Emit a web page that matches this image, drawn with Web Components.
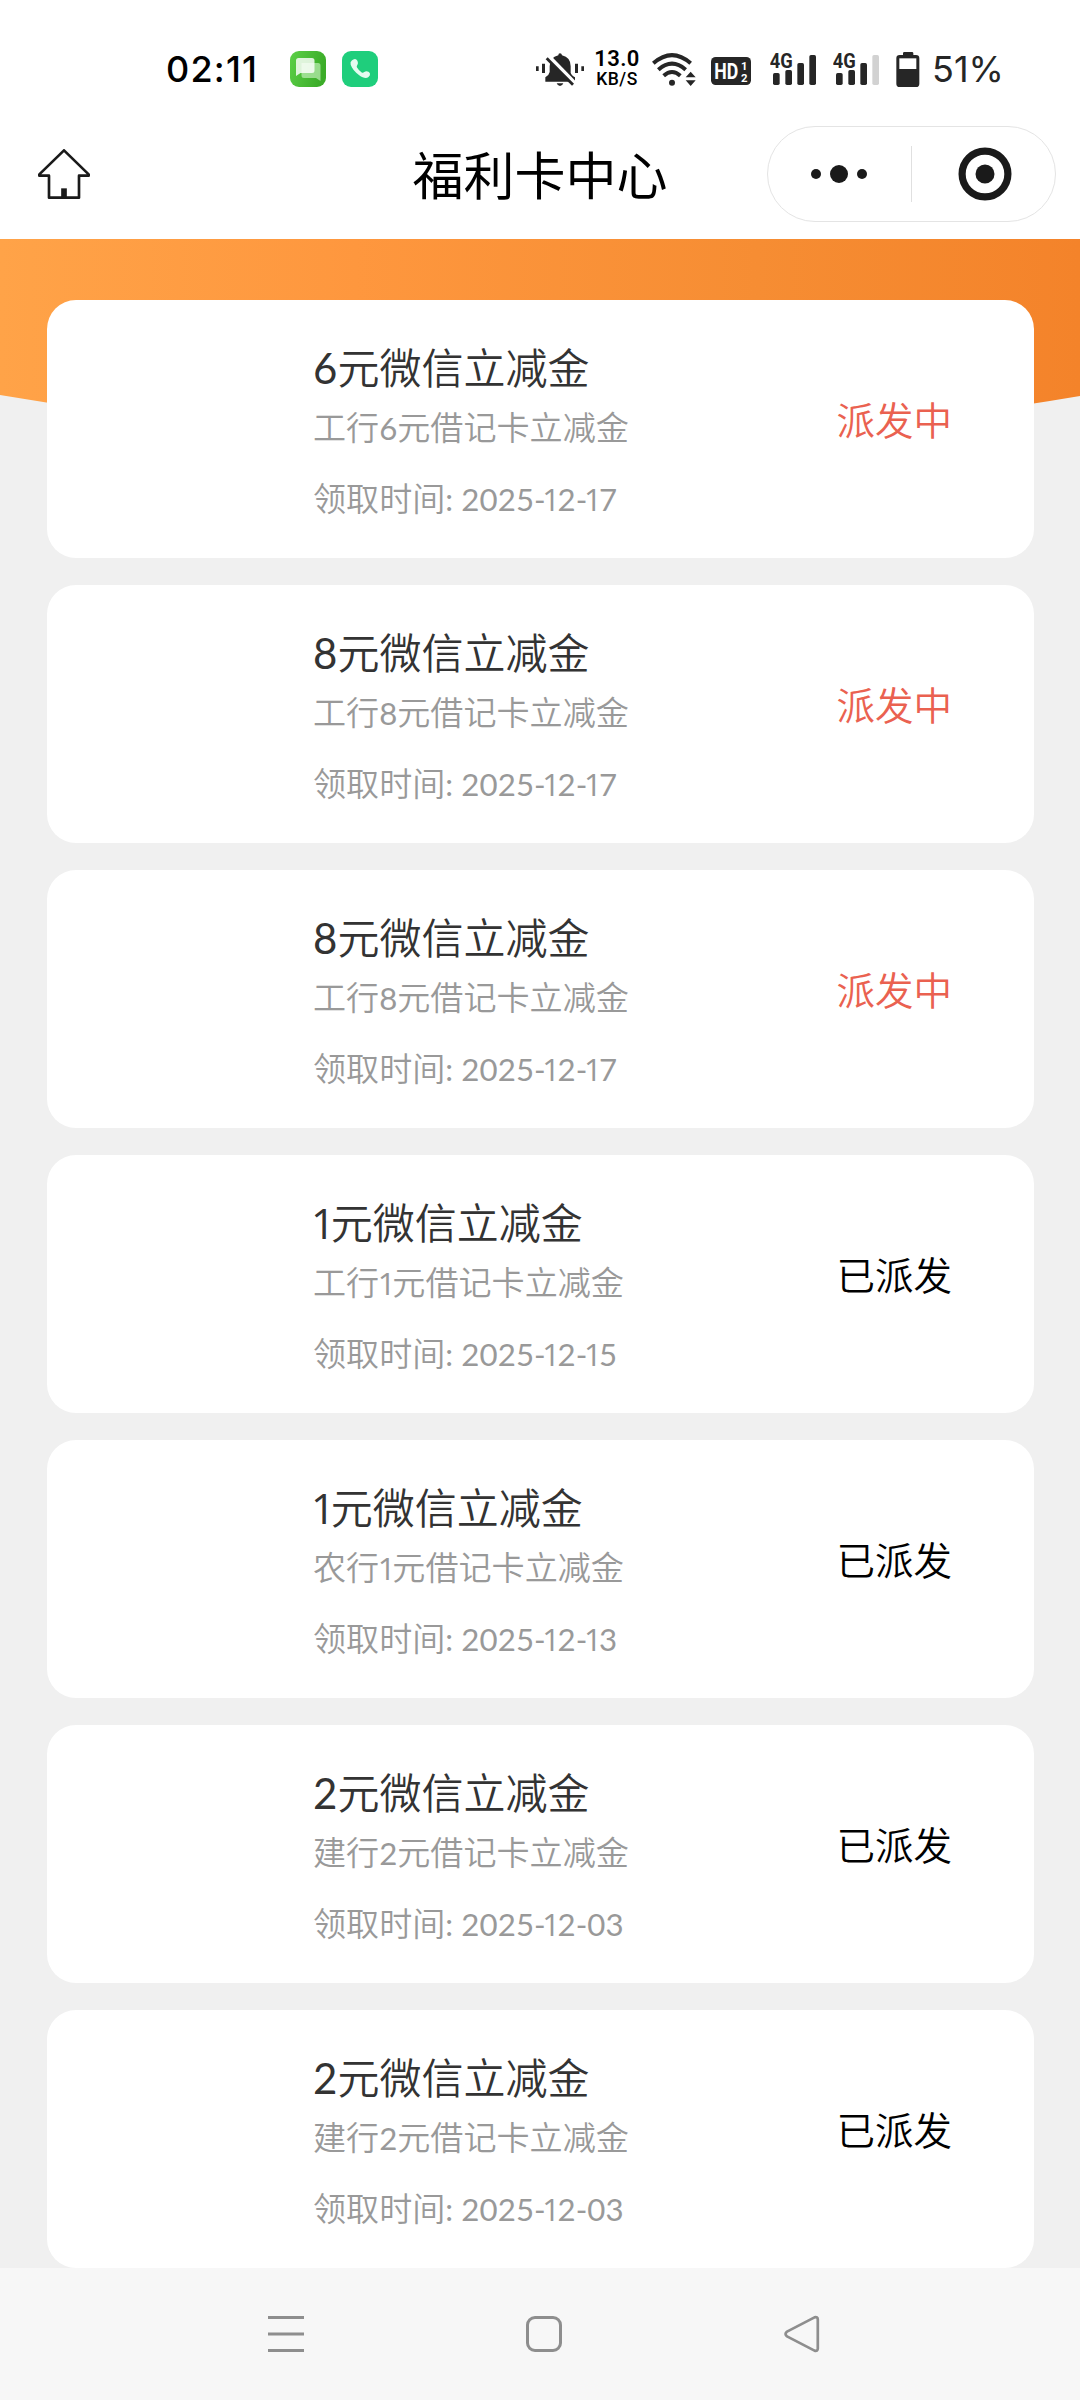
<!DOCTYPE html>
<html lang="zh-CN">
<head>
<meta charset="utf-8">
<title>福利卡中心</title>
<style>
	html, body {
		margin: 0;
		padding: 0;
	}
	body {
		width: 1080px;
		height: 2400px;
		overflow: hidden;
		background: #f0f0f0;
		font-family: Lato, "Noto Sans CJK SC", sans-serif;
	}
</style>
</head>
<body>
<welfare-page></welfare-page>

<script>
const html = String.raw;

function define(name, markup) {
	customElements.define(name, class extends HTMLElement {
		constructor() {
			super();
			this.attachShadow({ mode: 'open' }).innerHTML = markup;
		}
	});
}

const signalIcon = (lastBar) => html`
	<svg width="46" height="36" viewBox="30 60 138 108">
		<text x="29" y="111" font-family="Roboto" font-size="59" font-weight="700" textLength="69" lengthAdjust="spacingAndGlyphs">4G</text>
		<rect x="39" y="126" width="20" height="36" rx="5"/>
		<rect x="76" y="117" width="20" height="45" rx="5"/>
		<rect x="112" y="96" width="20" height="66" rx="5"/>
		<rect x="148" y="72" width="20" height="90" rx="5" fill="${lastBar}"/>
	</svg>
`;

define('status-bar', html`
	<style>
		:host {
			display: flex;
			align-items: center;
			box-sizing: border-box;
			height: 110px;
			padding: 28px 78px 0 166px;
			background: #fff;
			color: #000;
			font-family: Inter, sans-serif;
		}
		svg { display: block; fill: #262626; flex: none; }
		.time { width: 124px; font-size: 36px; font-weight: 500; line-height: 36px; letter-spacing: 1.2px; }
		.apps { display: flex; gap: 16px; }
		.right { display: flex; align-items: center; margin-left: auto; }
		.speed { width: 46px; margin: 0 12px 0 10px; text-align: center; font-family: Roboto, sans-serif; white-space: nowrap; }
		.speed div:first-child { font-size: 22px; font-weight: 600; line-height: 20px; letter-spacing: 0.4px; }
		.speed div:last-child { font-size: 17.500px; font-weight: 500; line-height: 20px; letter-spacing: 0.5px; }
		.hd { margin: 0 19px 0 15px; }
		.second { margin: 0 17px; }
		.percent { width: 70px; margin-left: 12px; color: #262626; font-size: 36px; line-height: 36px; white-space: nowrap; }
	</style>
	<div class="time">02:11</div>
	<div class="apps">
		<svg width="36" height="36" viewBox="0 0 36 36">
			<defs>
				<linearGradient id="g" x1="0" y1="0" x2="1" y2="0.3">
					<stop offset="0" stop-color="#5cd048"/>
					<stop offset="1" stop-color="#3bac28"/>
				</linearGradient>
			</defs>
			<rect width="36" height="36" rx="9" fill="url(#g)"/>
			<path d="M13 12h15q2.500 0 2.500 2.500V30l-4.500-3H14q-2.500 0-2.500-2.500V12z" fill="#c9f2c2" opacity=".65"/>
			<path d="M8.500 7H22q2.500 0 2.500 2.500v10q0 2.500-2.500 2.500H10.500L6 25V9.500Q6 7 8.500 7z" fill="#fff" opacity=".82"/>
		</svg>
		<svg width="36" height="36" viewBox="0 0 36 36">
			<rect width="36" height="36" rx="9" fill="#1fce7c"/>
			<path d="M9.800 9.500Q12 7.300 14 8.200c2 1.200 2.500 4.200 1.300 5.800q-1 1.300-.3 2.500 2 3.300 4.700 5 1.200.8 2.600-.5c1.700-1.500 4.700-.7 5.600 1.300q.7 2-1.400 3.700c-2.200 1.800-5.500 1-9.300-1.800-4.300-3.200-7.600-7.300-8.500-10.500q-.8-2.700 1.100-4.200z" fill="#e4fbf0"/>
		</svg>
	</div>
	<div class="right">
		<svg width="48" height="36" viewBox="48 60 144 108">
			<path d="M120 67q5 0 6 6 26 6 26 33v19q1 6 13 14v13H76v-13q12-8 13-16v-17q0-27 26-33 0-6 5-6z"/>
			<path d="M110 157h20q-3 8-10 8t-10-8z"/>
			<path d="M84 76l80 82" stroke="#fff" stroke-width="15"/>
			<path d="M80 82l79 79" stroke="#262626" stroke-width="8.500"/>
			<path d="M48 106h8v14h-8zM66 98h9v28h-9zM165 98h9v28h-9zM184 106h8v14h-8z"/>
		</svg>
		<div class="speed"><div>13.0</div><div>KB/S</div></div>
		<svg width="44" height="36" viewBox="397 60 132 108">
			<g fill="none" stroke="#262626" stroke-width="12">
				<path d="M401 97q56-49 112 0"/>
				<path d="M416 116q41-36 82 0"/>
				<path d="M432 134q25-22 50 0"/>
			</g>
			<circle cx="457" cy="155" r="9"/>
			<path d="M498 139l15-17 15 17zM498 148h30l-15 17z"/>
		</svg>
		<svg class="hd" width="40" height="36" viewBox="573 60 120 108">
			<rect x="573" y="78" width="120" height="84" rx="14"/>
			<g fill="#fff" font-family="Roboto" font-weight="700">
				<text x="583" y="143" font-size="66" textLength="72" lengthAdjust="spacingAndGlyphs">HD</text>
				<text x="663" y="116" font-size="34">1</text>
				<text x="663" y="152" font-size="34">2</text>
			</g>
		</svg>
		${signalIcon('#262626')}
		<div class="second">${signalIcon('#d2d2d2')}</div>
		<svg width="24" height="36" viewBox="407 60 72 108">
			<path d="M428 72v-5q0-4 4-4h23q4 0 4 4v5h8q10 0 10 10v76q0 10-10 10h-49q-10 0-10-10V82q0-10 10-10z"/>
			<path d="M417 82h51v32h-51z" fill="#fff"/>
		</svg>
		<div class="percent">51%</div>
	</div>
`);

define('app-header', html`
	<style>
		:host {
			display: flex;
			align-items: center;
			justify-content: space-between;
			box-sizing: border-box;
			height: 129px;
			padding: 0 24px 1px 38px;
			background: #fff;
		}
		svg { display: block; }
		.home { width: 275px; }
		h1 { margin: 4px 0 0; font-size: 51px; font-weight: 400; line-height: 60px; color: #000; }
		.capsule {
			display: flex;
			align-items: center;
			box-sizing: border-box;
			width: 289px;
			height: 96px;
			border: 1px solid #e4e4e4;
			border-radius: 48px;
		}
		.more, .close { display: flex; justify-content: center; }
		.more { width: 143px; }
		.close { flex: 1; padding-left: 4px; }
		.line { width: 1px; height: 56px; background: #e0e0e0; }
	</style>
	<div class="home">
		<svg width="52" height="50" viewBox="114 117 156 150" fill="none" stroke="#1a1a1a" stroke-width="8" stroke-linejoin="round">
			<path d="M192 121l74 72v4h-29v66h-90v-66h-29v-4z"/>
			<path d="M192 235v28" stroke-width="17"/>
		</svg>
	</div>
	<h1><slot></slot></h1>
	<div class="capsule">
		<div class="more">
			<svg width="58" height="54" fill="#1a1a1a">
				<circle cx="6" cy="27" r="5"/><circle cx="29" cy="27" r="9"/><circle cx="52" cy="27" r="5"/>
			</svg>
		</div>
		<div class="line"></div>
		<div class="close">
			<svg width="54" height="54" fill="#1a1a1a">
				<circle cx="27" cy="27" r="22.900" fill="none" stroke="#1a1a1a" stroke-width="7.200"/>
				<circle cx="27" cy="27" r="9.500"/>
			</svg>
		</div>
	</div>
`);

define('top-banner', html`
	<style>
		:host { display: block; height: 204px; }
		svg { display: block; }
	</style>
	<svg width="1080" height="204">
		<defs>
			<linearGradient id="b">
				<stop offset="0" stop-color="#ffa348"/>
				<stop offset="0.330" stop-color="#fe973e"/>
				<stop offset="0.700" stop-color="#f68d33"/>
				<stop offset="1" stop-color="#f4832a"/>
			</linearGradient>
		</defs>
		<path d="M0 0H1080V157Q540 249 0 156z" fill="url(#b)"/>
	</svg>
`);

// Digit runs are slightly smaller than the Han text, and "1" has no foot.
function markDigits(text) {
	return text.replace(/[\d:\- ]+/g, (run) => `<span class="num">${run.replace(/1/g, '<span class="one">1</span>')}</span>`);
}

class WelfareCard extends HTMLElement {
	constructor() {
		super();
		this.attachShadow({ mode: 'open' });
	}

	connectedCallback() {
		const { name, desc, date, status } = this.dataset;
		this.shadowRoot.innerHTML = html`
			<style>
				:host {
					display: flex;
					align-items: flex-start;
					justify-content: space-between;
					box-sizing: border-box;
					height: 258px;
					padding: 40px 82px 0 266px;
					border-radius: 29px;
					background: #fff;
					font-weight: 350;
					white-space: nowrap;
				}
				.name { font-size: 42px; line-height: 56px; color: #333; }
				.desc, .date { font-size: 33.1px; line-height: 44px; color: #999; }
				.desc { margin-top: 9px; }
				.date { margin-top: 26px; }
				.num { font-weight: 400; }
				.desc .num, .date .num { font-size: 31.2px; }
				.date .num { letter-spacing: 0.1px; }
				.one { font-family: "Open Sans", sans-serif; margin: 0 -0.100em 0 -0.050em; }
				.date .one { margin: 0 -0.090em 0 -0.110em; }
				.status { margin-top: 58px; font-size: 38.500px; line-height: 44px; color: #000; }
				.status.pending { color: #ea6150; }
			</style>
			<div>
				<div class="name">${markDigits(name)}</div>
				<div class="desc">${markDigits(desc)}</div>
				<div class="date">${markDigits(`领取时间: ${date}`)}</div>
			</div>
			<div class="status ${status === '派发中' ? 'pending' : ''}">${status}</div>
		`;
	}
}
customElements.define('welfare-card', WelfareCard);

define('system-nav', html`
	<style>
		:host {
			display: flex;
			align-items: center;
			justify-content: center;
			gap: 220px;
			box-sizing: border-box;
			height: 132px;
			padding-left: 7px;
			background: #f7f7f7;
		}
		svg { display: block; fill: none; stroke: #8e8e8e; stroke-width: 3; }
	</style>
	<svg width="38" height="38"><path d="M1 2.500h36M1 19h36M1 35.500h36"/></svg>
	<svg width="38" height="38"><rect x="2.500" y="2.500" width="33" height="33" rx="7.500"/></svg>
	<svg width="38" height="38" stroke-linejoin="round"><path d="M31.500 2.400L4 16.600q-3 2.400 0 4.800l27.500 14.200q3.300.8 3.300-2V4.400q0-2.800-3.300-2z" stroke-width="2.700"/></svg>
`);

const records = [
	['6元微信立减金', '工行6元借记卡立减金', '2025-12-17', '派发中'],
	['8元微信立减金', '工行8元借记卡立减金', '2025-12-17', '派发中'],
	['8元微信立减金', '工行8元借记卡立减金', '2025-12-17', '派发中'],
	['1元微信立减金', '工行1元借记卡立减金', '2025-12-15', '已派发'],
	['1元微信立减金', '农行1元借记卡立减金', '2025-12-13', '已派发'],
	['2元微信立减金', '建行2元借记卡立减金', '2025-12-03', '已派发'],
	['2元微信立减金', '建行2元借记卡立减金', '2025-12-03', '已派发']
];

define('welfare-page', html`
	<style>
		:host { display: flex; flex-direction: column; height: 2400px; }
		main { flex: 1; min-height: 0; overflow: hidden; }
		.list {
			position: relative;
			display: flex;
			flex-direction: column;
			gap: 27px;
			margin: -143px 46px 0 47px;
		}
		welfare-card { flex: none; }
	</style>
	<status-bar></status-bar>
	<app-header>福利卡中心</app-header>
	<main>
		<top-banner></top-banner>
		<div class="list">
			${records.map(([name, desc, date, status]) => html`
				<welfare-card data-name="${name}" data-desc="${desc}" data-date="${date}" data-status="${status}"></welfare-card>
			`).join('')}
		</div>
	</main>
	<system-nav></system-nav>
`);
</script>
</body>
</html>
